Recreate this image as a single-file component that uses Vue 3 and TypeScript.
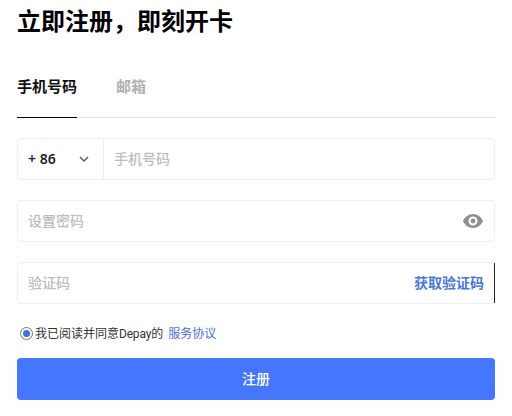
<script setup lang="ts">
const title = "立即注册，即刻开卡";
</script>

<template>
  <div class="page">
    <h1 class="title">{{ title }}</h1>
    <div class="tabs">
      <div class="tab active">手机号码</div>
      <div class="tab">邮箱</div>
    </div>
    <div class="field phone">
      <div class="code">
        <span class="dial">+ 86</span>
        <svg width="10" height="6" viewBox="0 0 10 6" fill="none"><path d="M1 1l4 4 4-4" stroke="#555" stroke-width="1.4"/></svg>
      </div>
      <div class="ph inset">手机号码</div>
    </div>
    <div class="field">
      <div class="ph grow">设置密码</div>
      <svg class="eye" width="20" height="14" viewBox="0 0 20 14"><path fill="#8f8f8f" fill-rule="evenodd" d="M10 0C5.500 0 1.700 2.900 0 7c1.700 4.100 5.500 7 10 7s8.300-2.900 10-7c-1.700-4.100-5.500-7-10-7zm0 11.500A4.500 4.500 0 1 1 10 2.500a4.500 4.500 0 0 1 0 9zM10 4.600a2.400 2.400 0 1 0 0 4.800 2.400 2.400 0 0 0 0-4.800z"/></svg>
    </div>
    <div class="field code-field">
      <div class="ph grow">验证码</div>
      <span class="send">获取验证码</span>
    </div>
    <div class="agree">
      <span class="radio"><span class="dot"></span></span>
      <span class="agree-text">我已阅读并同意<span class="latin">Depay</span>的</span>
      <a class="link">服务协议</a>
    </div>
    <button class="submit">注册</button>
  </div>
</template>

<style scoped>
.page {
  width: 478px;
  height: 416px;
  box-sizing: border-box;
  margin-left: 17px;
  padding-top: 5px;
  font-family: "Noto Sans CJK SC", "Noto Sans", sans-serif;
  display: flex;
  flex-direction: column;
  overflow: hidden;
}
.title {
  margin: 0;
  font-size: 24px;
  line-height: 30px;
  font-weight: 700;
  color: #000;
}
.tabs {
  display: flex;
  gap: 39px;
  margin-top: 35px;
  height: 48px;
  border-bottom: 1px solid #e0e0e0;
  box-sizing: border-box;
  flex-shrink: 0;
}
.tab {
  font-size: 15px;
  line-height: 31px;
  font-weight: 700;
  color: #b0b0b0;
  height: 48px;
  box-sizing: border-box;
}
.tab.active {
  width: 60px;
  color: #111;
  border-bottom: 1px solid #000;
}
.field {
  height: 42px;
  box-sizing: border-box;
  border: 1px solid #efefef;
  border-radius: 4px;
  margin-bottom: 20px;
  display: flex;
  align-items: center;
  flex-shrink: 0;
}
.phone {
  margin-top: 20px;
}
.code {
  width: 86px;
  height: 100%;
  box-sizing: border-box;
  padding: 0 14px 0 10px;
  border-right: 1px solid #efefef;
  display: flex;
  align-items: center;
  justify-content: space-between;
  color: #222;
}
.dial {
  font-family: "Noto Sans", sans-serif;
  font-size: 14px;
  font-weight: 600;
  padding-bottom: 2px;
}
.ph {
  font-size: 14px;
  font-weight: 500;
  color: #bdbdbd;
  padding-bottom: 2px;
}
.inset {
  padding-left: 10px;
}
.grow {
  flex: 1;
  padding-left: 10px;
}
.eye {
  margin-right: 11px;
}
.code-field {
  position: relative;
  margin-bottom: 0;
}
.code-field::after {
  content: "";
  position: absolute;
  right: -1px;
  top: 0;
  bottom: 0;
  width: 1px;
  background: #222;
}
.send {
  font-size: 14px;
  font-weight: 700;
  color: #4a78d8;
  margin-right: 10px;
  padding-bottom: 2px;
}
.agree {
  display: flex;
  align-items: center;
  margin-top: 19px;
  padding-left: 3px;
  height: 20px;
  font-size: 12px;
  flex-shrink: 0;
}
.radio {
  width: 13px;
  height: 13px;
  box-sizing: border-box;
  border: 1px solid #777;
  border-radius: 50%;
  display: flex;
  align-items: center;
  justify-content: center;
  margin-right: 2px;
}
.dot {
  width: 7px;
  height: 7px;
  border-radius: 50%;
  background: #3f6fd8;
}
.agree-text {
  color: #333;
  padding-bottom: 2px;
}
.latin {
  font-family: "Roboto", sans-serif;
  letter-spacing: -0.2px;
}
.link {
  margin-left: 5px;
  color: #4a6fd0;
  padding-bottom: 2px;
}
.submit {
  margin-top: 15px;
  height: 42px;
  border: none;
  border-radius: 4px;
  background: #4477fe;
  color: #fff;
  font-family: inherit;
  font-size: 14px;
  font-weight: 500;
  padding: 0 0 2px;
  flex-shrink: 0;
}
</style>
